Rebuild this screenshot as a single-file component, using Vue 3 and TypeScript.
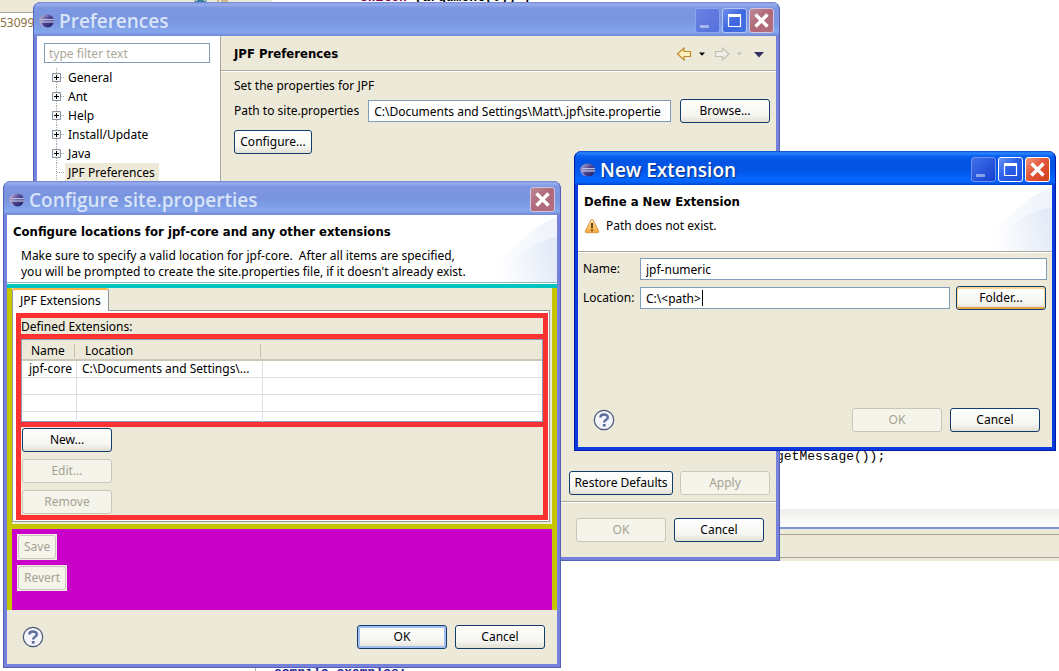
<script setup lang="ts">
import { ref } from 'vue'

interface Extension {
  name: string
  location: string
}

const filter = ref('')
const sitePath = ref('C:\\Documents and Settings\\Matt\\.jpf\\site.propertie')
const extensionName = ref('jpf-numeric')
const extensionLocation = ref('C:\\<path>')
const categories: string[] = ['General', 'Ant', 'Help', 'Install/Update', 'Java']
const extensions: Extension[] = [
  { name: 'jpf-core', location: 'C:\\Documents and Settings\\...' },
]
const emptyRows = 3
</script>

<template>
  <main class="desktop">
    <svg class="defs" aria-hidden="true">
      <defs>
        <linearGradient id="orb" x1="0" y1="0" x2="1" y2="1">
          <stop offset="0" stop-color="#b9a3cf" />
          <stop offset="0.45" stop-color="#4c4796" />
          <stop offset="1" stop-color="#1d1a5c" />
        </linearGradient>
        <linearGradient id="warn" x1="0" y1="0" x2="0" y2="1">
          <stop offset="0" stop-color="#ffe9a8" />
          <stop offset="1" stop-color="#f3a83c" />
        </linearGradient>
        <linearGradient id="swoosh" x1="0" y1="0.6" x2="1" y2="0.4">
          <stop offset="0" stop-color="#ffffff" />
          <stop offset="1" stop-color="#dfe7f6" />
        </linearGradient>
        <symbol id="eclipse" viewBox="0 0 16 16">
          <ellipse cx="7" cy="8" rx="6.8" ry="6.3" fill="#c2a5bb" opacity="0.7" />
          <circle cx="8.6" cy="8" r="6.4" fill="url(#orb)" />
          <path d="M2.4 6.7H15M2 9H15" stroke="#dfe2f7" stroke-width="1.1" />
        </symbol>
        <symbol id="cross" viewBox="0 0 23 23">
          <path d="M5.5 5.5L17.5 17.5M17.5 5.5L5.5 17.5" stroke="#fff" stroke-width="3.4" />
        </symbol>
        <symbol id="maximize" viewBox="0 0 23 23">
          <path d="M5.5 7V17.5H17.5V7" fill="none" stroke="#fff" stroke-width="1.2" />
          <path d="M5 6.5H18" stroke="#fff" stroke-width="3" />
        </symbol>
        <symbol id="minimize" viewBox="0 0 23 23">
          <path d="M4 17.5H13" stroke="#fff" stroke-width="3" opacity="0.45" />
        </symbol>
        <symbol id="help" viewBox="0 0 22 22">
          <circle cx="11" cy="11" r="9.7" fill="#f3f5fb" stroke="#4b5878" stroke-width="1.2" />
          <path d="M7.4 8.6C7.4 4.6 14.8 4.6 14.8 8.4C14.8 11 11.2 10.6 11.2 13.4" fill="none" stroke="#5c6f9b" stroke-width="2.5" />
          <path d="M9.8 15H12.6V17.6H9.8Z" fill="#5c6f9b" />
        </symbol>
        <symbol id="sweep" viewBox="0 0 70 66" preserveAspectRatio="none">
          <path d="M0 66C14 44 38 14 70 2V66Z" fill="url(#swoosh)" opacity="0.5" />
          <path d="M10 66C22 44 44 26 70 22V66Z" fill="url(#swoosh)" opacity="0.8" />
        </symbol>
      </defs>
    </svg>

    <div class="backdrop">
      <div class="strip">
        <div class="ruler">
          <svg class="marks" viewBox="0 0 44 3">
            <path d="M1 0V1.5H12V0M3 .5H10" fill="none" stroke="#3b7f9c" />
            <path d="M24 0V2M27 1H34" stroke="#b08a3c" />
          </svg>
        </div>
        <code class="code-top"><b>switch</b> (argument(0)) {</code>
      </div>
      <div class="editor">
        <span class="line-no">53099</span>
        <code class="code-line">getMessage());</code>
      </div>
      <div class="fade"></div>
      <div class="status"></div>
      <div class="footer-code">
        <code>compile examples:</code>
      </div>
    </div>

    <section class="window prefs inactive">
      <header class="title">
        <svg class="logo"><use href="#eclipse" /></svg>
        <h1>Preferences</h1>
        <button class="cap dim" aria-label="Minimize"><svg><use href="#minimize" /></svg></button>
        <button class="cap" aria-label="Maximize"><svg><use href="#maximize" /></svg></button>
        <button class="cap close" aria-label="Close"><svg><use href="#cross" /></svg></button>
      </header>
      <div class="panes">
        <nav class="side">
          <input v-model="filter" class="field filter" type="text" placeholder="type filter text" aria-label="Filter" />
          <ul class="tree">
            <li v-for="item in categories" :key="item">
              <svg class="plus" viewBox="0 0 9 9">
                <path d="M.5 .5H8.5V8.5H.5Z" fill="#f6f5f0" stroke="#8494a8" />
                <path d="M2 4.5H7M4.5 2V7" stroke="#000" />
              </svg>
              <span class="leaf">{{ item }}</span>
            </li>
            <li class="last"><span class="leaf selected">JPF Preferences</span></li>
          </ul>
        </nav>
        <div class="page">
          <div class="page-head">
            <h2>JPF Preferences</h2>
            <svg class="arrows" viewBox="0 0 90 16">
              <path d="M1.5 8L8 2V5.5H14.5V10.5H8V14Z" fill="#fff0bd" stroke="#c08a2c" stroke-width="1.2" />
              <path d="M23 6.5H29L26 9.8Z" fill="#000" />
              <path d="M53 8L46.5 2V5.5H39.5V10.5H46.5V14Z" fill="#f0eee6" stroke="#c3c0b4" stroke-width="1.2" />
              <path d="M61 6.5H66L63.5 9.3Z" fill="#c3c0b4" />
              <path d="M78 6H88L83 11.5Z" fill="#32305e" />
            </svg>
          </div>
          <div class="page-body">
            <p>Set the properties for JPF</p>
            <div class="path-row">
              <label for="site">Path to site.properties</label>
              <input id="site" v-model="sitePath" class="field" type="text" />
              <button class="btn">Browse...</button>
            </div>
            <button class="btn configure">Configure...</button>
            <div class="apply-row">
              <button class="btn restore">Restore Defaults</button>
              <button class="btn" disabled>Apply</button>
            </div>
          </div>
        </div>
      </div>
      <footer class="actions prefs-actions">
        <button class="btn" disabled>OK</button>
        <button class="btn">Cancel</button>
      </footer>
    </section>

    <section class="window config inactive">
      <header class="title">
        <svg class="logo"><use href="#eclipse" /></svg>
        <h1>Configure site.properties</h1>
        <button class="cap close" aria-label="Close"><svg><use href="#cross" /></svg></button>
      </header>
      <div class="banner">
        <svg class="sweep"><use href="#sweep" /></svg>
        <h2>Configure locations for jpf-core and any other extensions</h2>
        <p class="hint">Make sure to specify a valid location for jpf-core.&nbsp; After all items are specified,<br />you will be prompted to create the site.properties file, if it doesn't already exist.</p>
      </div>
      <div class="olive">
        <div class="tabs"><button class="tab">JPF Extensions</button></div>
        <div class="tab-body">
          <div class="red">
            <div class="defined">Defined Extensions:</div>
            <div class="table-box">
              <table>
                <colgroup><col class="c1" /><col class="c2" /><col /></colgroup>
                <thead>
                  <tr><th>Name</th><th>Location</th><th></th></tr>
                </thead>
                <tbody>
                  <tr v-for="ext in extensions" :key="ext.name">
                    <td>{{ ext.name }}</td><td>{{ ext.location }}</td><td></td>
                  </tr>
                  <tr v-for="n in emptyRows" :key="n"><td></td><td></td><td></td></tr>
                </tbody>
              </table>
            </div>
            <div class="edit-col">
              <button class="btn">New...</button>
              <button class="btn" disabled>Edit...</button>
              <button class="btn" disabled>Remove</button>
            </div>
          </div>
        </div>
        <div class="magenta">
          <span class="chip"><button class="btn" disabled>Save</button></span>
          <span class="chip"><button class="btn" disabled>Revert</button></span>
        </div>
      </div>
      <footer class="actions config-actions">
        <button class="help" aria-label="Help"><svg><use href="#help" /></svg></button>
        <button class="btn default">OK</button>
        <button class="btn">Cancel</button>
      </footer>
    </section>

    <section class="window ext">
      <header class="title">
        <svg class="logo"><use href="#eclipse" /></svg>
        <h1>New Extension</h1>
        <button class="cap dim" aria-label="Minimize"><svg><use href="#minimize" /></svg></button>
        <button class="cap" aria-label="Maximize"><svg><use href="#maximize" /></svg></button>
        <button class="cap close" aria-label="Close"><svg><use href="#cross" /></svg></button>
      </header>
      <div class="banner ext-banner">
        <svg class="sweep"><use href="#sweep" /></svg>
        <h2>Define a New Extension</h2>
        <p class="warning">
          <svg viewBox="0 0 16 16">
            <path d="M8 1.3C8.6 1.3 9 1.7 9.3 2.3L14.6 13C15 14 14.6 14.7 13.6 14.7H2.4C1.4 14.7 1 14 1.4 13L6.7 2.3C7 1.7 7.4 1.3 8 1.3Z" fill="url(#warn)" stroke="#d9963f" />
            <path d="M8 5V10.2M8 11.4V13.2" stroke="#5a3410" stroke-width="1.8" />
          </svg>
          Path does not exist.
        </p>
      </div>
      <form class="form" @submit.prevent>
        <label for="ext-name">Name:</label>
        <input id="ext-name" v-model="extensionName" class="field wide" type="text" />
        <label for="ext-loc">Location:</label>
        <div class="caret-field">
          <input id="ext-loc" v-model="extensionLocation" class="field" type="text" />
        </div>
        <button type="button" class="btn hot">Folder...</button>
      </form>
      <footer class="actions ext-actions">
        <button class="help" aria-label="Help"><svg><use href="#help" /></svg></button>
        <button class="btn" disabled>OK</button>
        <button class="btn">Cancel</button>
      </footer>
    </section>
  </main>
</template>

<style>
body {
  background: #fff;
}
</style>

<style scoped>
* {
  box-sizing: border-box;
}
.desktop {
  position: relative;
  min-height: 100vh;
  overflow: hidden;
  background: #fff;
  color: #000;
  font: 12px/16px "Noto Sans", "DejaVu Sans Condensed", sans-serif;
}
h1, h2, p, ul {
  margin: 0;
  padding: 0;
}
.defs {
  position: absolute;
  width: 0;
  height: 0;
}
button, input {
  font: inherit;
  color: inherit;
}

/* editor behind the windows */
.backdrop {
  position: absolute;
  inset: 0;
  display: flex;
  flex-direction: column;
}
.backdrop > * {
  flex-shrink: 0;
}
code {
  font: 13px/16px "Liberation Mono", monospace;
  white-space: pre;
}
.strip {
  display: flex;
  height: 13px;
}
.ruler {
  width: 272px;
  background: #ece9d8;
  border-bottom: 1px solid #aca899;
}
.marks {
  display: block;
  width: 44px;
  height: 3px;
  margin-left: 194px;
}
.code-top {
  margin: -10px 0 0 88px;
  font-weight: bold;
}
.code-top b {
  color: #7f0055;
}
.editor {
  display: flex;
  flex-direction: column;
  justify-content: space-between;
  min-height: 496px;
  padding: 2px 0 44px;
}
.line-no {
  color: #8b6f3d;
}
.code-line {
  margin-left: 776px;
}
.fade,
.status {
  margin-left: 560px;
}
.fade {
  height: 18px;
  background: linear-gradient(#eeeeec, #fff);
}
.status {
  height: 34px;
  border-top: 2px solid #7b93d4;
  background: linear-gradient(#ece9d8 5px, #a7a296 5px, #a7a296 6px, #ece9d8 6px, #ece9d8 28px, #a7a296 28px, #a7a296 29px, #ece9d8 29px);
}
.footer-code {
  width: 420px;
  margin: 103px 0 0 255px;
  padding-left: 18px;
  border-left: 1px solid #b5b2a6;
  color: #1c1c8a;
}
.footer-code code {
  font-weight: bold;
}

/* window frame */
.window {
  position: absolute;
  display: flex;
  flex-direction: column;
  border: solid #0a3bdc;
  border-width: 0 4px 4px;
  border-radius: 8px 8px 0 0;
  background: #ece9d8;
}
.window.inactive {
  border-color: #7581da;
}
.prefs {
  left: 33px;
  right: 279px;
  top: 2px;
  min-width: 640px;
}
.config {
  left: 3px;
  right: 498px;
  top: 181px;
  min-width: 520px;
}
.ext {
  left: 574px;
  right: 3px;
  top: 151px;
  min-width: 400px;
}
.window::after {
  content: "";
  position: absolute;
  inset: 0 -4px -4px;
  border: solid #0019a8;
  border-width: 0 1px 1px;
  border-radius: 8px 8px 0 0;
  pointer-events: none;
}
.window.inactive::after {
  border-color: #5560b8;
}
.title {
  display: flex;
  align-items: center;
  gap: 2px;
  height: 34px;
  margin: 0 -4px;
  padding: 3px 6px 0 6px;
  border-radius: 8px 8px 0 0;
  background: linear-gradient(#0a49c9, #2a86ff 2px, #0a62f0 5px, #0353e4 9px, #0256e8 20px, #0567ff 28px, #0464fb 31px, #0140c8);
}
.inactive .title {
  background: linear-gradient(#6f83cf, #98aeee 2px, #7c96e2 6px, #7a94de 18px, #7fa0e8 26px, #85a8ec 30px, #7386d8);
}
.logo {
  width: 16px;
  height: 16px;
}
.title h1 {
  flex: 1;
  padding-left: 2px;
  color: #fff;
  font: 600 19px/24px "Open Sans", "Noto Sans", sans-serif;
  text-shadow: 1px 1px 1px #0c2f88;
  white-space: nowrap;
}
.inactive .title h1 {
  color: #d8e4f8;
  text-shadow: none;
}
.cap {
  width: 25px;
  height: 25px;
  padding: 0;
  border: 1px solid #fff;
  border-radius: 3px;
  background: linear-gradient(135deg, #6a94f5, #2a5fe6 45%, #1c4fdc);
}
.cap svg {
  display: block;
  width: 23px;
  height: 23px;
}
.cap.dim {
  border-color: #6d93f0;
  background: linear-gradient(135deg, #3f70ea, #1740cf);
}
.cap.close {
  background: linear-gradient(135deg, #f09a80, #e2573a 45%, #d0401c);
}
.inactive .cap {
  border-color: #b5c6f5;
  background: linear-gradient(135deg, #6c8eec, #3f68e0 50%, #4470e4);
}
.inactive .cap.dim {
  border-color: #8ba4ee;
  background: linear-gradient(135deg, #6a82e4, #5670dc);
}
.inactive .cap.close {
  border-color: #d3c3dc;
  background: linear-gradient(135deg, #bd8795, #b06878 50%, #b3707f);
}

/* shared controls */
.btn {
  width: 90px;
  height: 24px;
  padding: 0;
  border: 1px solid #123c6e;
  border-radius: 3px;
  background: linear-gradient(#fff, #f5f5f1 70%, #e2dfd2);
  white-space: nowrap;
}
.btn:disabled {
  border-color: #c9c7ba;
  background: #f5f4ea;
  color: #a5a292;
}
.btn.default {
  box-shadow: inset 0 0 0 2px #a3bff0;
}
.btn.hot {
  box-shadow: inset 0 1px 0 1px #fbd893, inset 0 -1px 0 1px #e0a445;
}
.field {
  width: 100%;
  min-width: 0;
  height: 22px;
  padding: 0 5px;
  border: 1px solid #7f9db9;
  border-radius: 0;
  background: #fff;
}
.field::placeholder {
  color: #aca899;
  opacity: 1;
}
h2 {
  font: bold 13px/16px "DejaVu Sans Condensed", "DejaVu Sans", sans-serif;
}
.actions {
  display: flex;
  align-items: center;
  justify-content: flex-end;
  gap: 8px;
  padding: 0 12px;
}
.help {
  width: 22px;
  height: 22px;
  margin-right: auto;
  padding: 0;
  border: 0;
  background: none;
}
.help svg {
  display: block;
  width: 22px;
  height: 22px;
}

/* preferences */
.panes {
  display: flex;
  border-bottom: 1px solid #aca899;
}
.side {
  flex: 0 0 184px;
  padding: 7px 10px 0 7px;
  background: #fff;
  border-right: 1px solid #aca899;
}
.side .filter {
  height: 20px;
  padding: 0 4px;
}
.tree {
  margin-top: 5px;
  padding-left: 8px;
  list-style: none;
}
.tree li {
  display: flex;
  align-items: center;
  height: 19px;
  background:
    repeating-linear-gradient(#aaa 0 1px, transparent 1px 2px) 4px 0 / 1px 100% no-repeat,
    repeating-linear-gradient(90deg, #aaa 0 1px, transparent 1px 2px) 5px 9px / 8px 1px no-repeat;
}
.plus {
  width: 9px;
  height: 9px;
}
.leaf {
  margin-left: 4px;
  padding: 0 4px 0 3px;
  line-height: 19px;
}
.last .leaf {
  margin-left: 13px;
}
.selected {
  background: #ece9d8;
}
.page {
  flex: 1;
  min-width: 0;
}
.page-head {
  display: flex;
  align-items: center;
  justify-content: space-between;
  height: 35px;
  padding: 2px 10px 0 13px;
  border-bottom: 1px solid #aca899;
  box-shadow: 0 1px #fff;
}
.arrows {
  width: 90px;
  height: 16px;
}
.page-body {
  display: flex;
  flex-direction: column;
  min-height: 430px;
  padding: 7px 6px 6px 13px;
}
.path-row {
  display: flex;
  align-items: center;
  gap: 9px;
  margin: 5px 0 7px;
}
.path-row label {
  flex: none;
}
.path-row .field {
  flex: 1;
}
.path-row .btn {
  flex: none;
}
.configure {
  width: 78px;
}
.apply-row {
  display: flex;
  justify-content: flex-end;
  gap: 7px;
  margin-top: auto;
}
.restore {
  width: 104px;
}
.prefs-actions {
  height: 55px;
  border-top: 1px solid #fff;
}

/* configure */
.banner {
  position: relative;
  height: 68px;
  padding: 9px 6px 0;
  border-bottom: 1px solid #9db5c8;
  box-shadow: 0 1px #fff;
  background: #fff;
}
.banner > * {
  position: relative;
}
.banner .sweep {
  position: absolute;
  right: 0;
  bottom: 0;
  width: 70px;
  height: 100%;
}
.hint {
  margin-top: 8px;
  padding-left: 8px;
  white-space: nowrap;
}
.config .banner {
  border-bottom-color: #8fb7c5;
}
.olive {
  border: solid #c6c600;
  border-width: 0 5px;
  box-shadow: 0 -5px #00c5c2;
  margin-top: 5px;
}
.tabs {
  height: 22px;
}
.tab {
  height: 23px;
  padding: 0 7px;
  border: 1px solid #919b9c;
  border-top: 2px solid #ffb648;
  border-bottom: 0;
  border-radius: 3px 3px 0 0;
  background: #fcfcfa;
}
.tab-body {
  margin-right: 2px;
  padding: 2px 1px 1px 3px;
  border: 1px solid #919b9c;
  background: #fff;
}
.red {
  border: 5px solid #fc3232;
  background: #ece9d8;
}
.defined {
  height: 21px;
  border-bottom: 5px solid #fc3232;
  line-height: 17px;
}
.table-box {
  height: 88px;
  border-bottom: 5px solid #fc3232;
  overflow: hidden;
  background: #fff;
  box-shadow: inset 0 0 0 1px #8c9cb4;
  padding: 1px 1px 0;
}
table {
  width: 100%;
  table-layout: fixed;
  border-collapse: separate;
  border-spacing: 0;
}
.c1 {
  width: 55px;
}
.c2 {
  width: 186px;
}
th {
  height: 21px;
  padding: 2px 8px 0 9px;
  border-bottom: 2px solid #cbc7b8;
  background: linear-gradient(#c5c2b2, #c5c2b2) right 2px top 4px / 1px 14px no-repeat #ece9d8;
  font-weight: normal;
  text-align: left;
}
th:nth-child(2) {
  padding-left: 8px;
}
th:last-child {
  background: #ece9d8;
}
td {
  height: 17px;
  padding: 0 0 0 5px;
  border-right: 1px solid #dedede;
  border-bottom: 1px solid #dedede;
  white-space: nowrap;
}
td:first-child {
  padding-left: 7px;
}
td:last-child {
  border-right: 0;
}
.edit-col {
  display: flex;
  flex-direction: column;
  gap: 7px;
  padding: 1px;
}
.magenta {
  display: flex;
  flex-direction: column;
  align-items: flex-start;
  gap: 5px;
  margin-top: 2px;
  height: 86px;
  padding: 5px;
  border-top: 5px solid #c6c600;
  background: #c800c8;
}
.chip {
  display: flex;
  padding: 1px;
  background: #f0eee2;
}
.chip .btn {
  width: auto;
  padding: 0 5px;
}
.config-actions {
  height: 54px;
  padding-left: 15px;
}

/* new extension */
.ext-banner {
  height: 67px;
  border-bottom-color: #aca899;
}
.warning {
  display: flex;
  align-items: center;
  gap: 6px;
  margin-top: 8px;
}
.warning svg {
  width: 16px;
  height: 16px;
}
.form {
  display: grid;
  grid-template-columns: 51px 1fr 91px;
  column-gap: 6px;
  row-gap: 6px;
  align-items: center;
  padding: 6px 5px 0;
  min-height: 151px;
  align-content: start;
}
.wide {
  grid-column: 2 / 4;
}
.caret-field {
  position: relative;
}
.caret-field .field {
  display: block;
}
.caret-field::after {
  content: "";
  position: absolute;
  left: 62px;
  top: 3px;
  width: 1px;
  height: 16px;
  background: #000;
}
.ext-actions {
  height: 44px;
  padding: 0 12px 10px 15px;
}
</style>
